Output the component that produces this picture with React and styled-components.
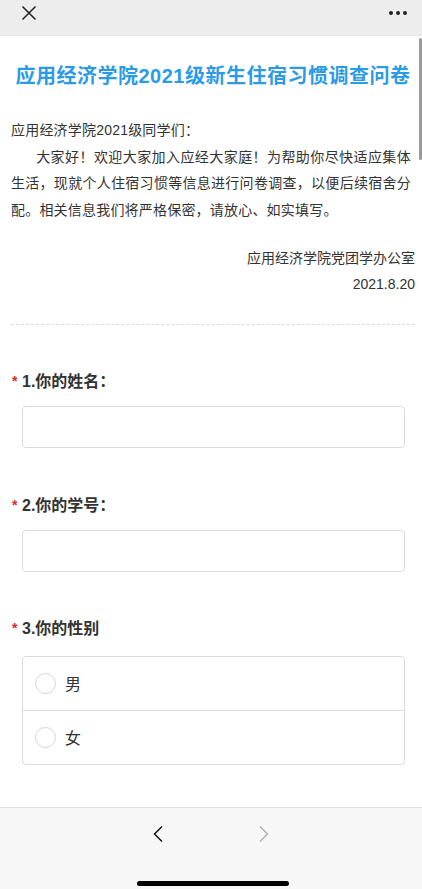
import React from 'react'
import styled, { createGlobalStyle } from 'styled-components'

const GlobalStyle = createGlobalStyle`
  html, body {
    margin: 0;
    padding: 0;
    background: #fff;
  }
  body {
    font-family: "Liberation Sans", "Noto Sans CJK SC", sans-serif;
    color: #333;
  }
`

const Screen = styled.div`
  width: 422px;
  height: 889px;
  display: flex;
  flex-direction: column;
  overflow: hidden;
  background: #fff;
`

const TopBar = styled.div`
  height: 36px;
  flex-shrink: 0;
  display: flex;
  align-items: flex-start;
  justify-content: space-between;
  padding: 0 14px 0 21px;
  box-sizing: border-box;
  background: #ededed;
  border-bottom: 1px solid #e4e4e4;
`

const BarButton = styled.div`
  height: 26px;
  display: flex;
  align-items: center;
`

const Body = styled.div`
  flex: 1;
  position: relative;
  overflow: hidden;
  padding: 0 7px 0 11px;
`

const ScrollThumb = styled.div`
  position: absolute;
  right: 0;
  top: 2px;
  width: 3px;
  height: 122px;
  border-radius: 2px;
  background: #9a9a9a;
`

const Title = styled.h1`
  margin: 26px 0 0;
  font-size: 20px;
  line-height: 28px;
  font-weight: bold;
  text-align: center;
  color: #2b9be5;
  white-space: nowrap;
  letter-spacing: 0.5px;
`

const Intro = styled.div`
  margin-top: 27px;
  padding-right: 4px;
  font-size: 14px;
  line-height: 26.7px;
  color: #333;
`

const Para = styled.p`
  margin: 0;
  text-indent: ${(props) => props.indent ? '1.8em' : '0'};
  text-align: justify;
  letter-spacing: 0.2px;
`

const Signature = styled.div`
  margin-top: 21px;
  text-align: right;
  font-size: 14px;
  line-height: 26.5px;
  color: #333;
`

const Divider = styled.div`
  margin: 26px 0 0;
  height: 0;
  border-top: 1.5px dashed #dcdcdc;
`

const Question = styled.div`
  margin-top: ${(props) => props.gap}px;
  padding: 0 10px 0 11px;
`

const Label = styled.div`
  position: relative;
  font-size: 16px;
  line-height: 24px;
  font-weight: bold;
  color: #333;
`

const Star = styled.span`
  position: absolute;
  left: -10px;
  top: -1px;
  color: #e0262c;
  font-size: 14px;
  font-weight: bold;
`

const Input = styled.div`
  margin-top: ${(props) => props.gap}px;
  height: 42px;
  border: 1px solid #dcdcdc;
  border-radius: 4px;
  box-sizing: border-box;
  background: #fff;
`

const Options = styled.div`
  margin-top: 15px;
  border: 1px solid #dcdcdc;
  border-radius: 4px;
  overflow: hidden;
`

const Option = styled.div`
  height: 53px;
  display: flex;
  align-items: center;
  gap: 9px;
  padding-left: 12px;
  border-top: ${(props) => props.first ? 'none' : '1px solid #dcdcdc'};
  font-size: 16px;
  color: #333;
`

const Radio = styled.span`
  width: 19px;
  height: 19px;
  border-radius: 50%;
  border: 1px solid #d6d6d6;
  background: #fff;
`

const BottomBar = styled.div`
  height: 82px;
  flex-shrink: 0;
  background: #f7f7f7;
  border-top: 1px solid #e2e2e2;
  box-sizing: border-box;
  display: flex;
  flex-direction: column;
  align-items: center;
`

const NavRow = styled.div`
  display: flex;
  gap: 94px;
  margin-top: 17px;
`

const HomeIndicator = styled.div`
  margin-top: auto;
  margin-bottom: 3px;
  margin-left: 4px;
  width: 152px;
  height: 5px;
  border-radius: 3px;
  background: #000;
`

const CloseIcon = () => (
  <svg width="16" height="16" viewBox="0 0 16 16">
    <path d="M1.5 1.5 L14.5 14.5 M14.5 1.5 L1.5 14.5" stroke="#222" strokeWidth="1.5" fill="none" />
  </svg>
)

const MoreIcon = () => (
  <svg width="20" height="6" viewBox="0 0 20 6">
    <circle cx="3" cy="3" r="2" fill="#222" />
    <circle cx="10" cy="3" r="2" fill="#222" />
    <circle cx="17" cy="3" r="2" fill="#222" />
  </svg>
)

const Chevron = ({ dir, color }) => (
  <svg width="12" height="18" viewBox="0 0 12 18">
    <path
      d={dir === 'left' ? 'M10 1.5 L2.5 9 L10 16.5' : 'M2 1.5 L9.5 9 L2 16.5'}
      stroke={color}
      strokeWidth="1.5"
      fill="none"
    />
  </svg>
)

const questions = [
  { no: 1, title: '你的姓名：', type: 'input', gap: 45 },
  { no: 2, title: '你的学号：', type: 'input', gap: 46 },
  { no: 3, title: '你的性别', type: 'radio', gap: 45, options: ['男', '女'] }
]

const App = () => (
  <Screen>
    <GlobalStyle />
    <TopBar>
      <BarButton><CloseIcon /></BarButton>
      <BarButton><MoreIcon /></BarButton>
    </TopBar>
    <Body>
      <ScrollThumb />
      <Title>应用经济学院2021级新生住宿习惯调查问卷</Title>
      <Intro>
        <Para>应用经济学院2021级同学们：</Para>
        <Para indent>大家好！欢迎大家加入应经大家庭！为帮助你尽快适应集体生活，现就个人住宿习惯等信息进行问卷调查，以便后续宿舍分配。相关信息我们将严格保密，请放心、如实填写。</Para>
      </Intro>
      <Signature>
        <div>应用经济学院党团学办公室</div>
        <div>2021.8.20</div>
      </Signature>
      <Divider />
      {questions.map((q) => (
        <Question key={q.no} gap={q.gap}>
          <Label><Star>*</Star>{q.no}.{q.title}</Label>
          {q.type === 'input' && <Input gap={12} />}
          {q.type === 'radio' &&
            <Options>
              {q.options.map((o, i) => (
                <Option key={o} first={i === 0}>
                  <Radio />
                  {o}
                </Option>
              ))}
            </Options>
          }
        </Question>
      ))}
    </Body>
    <BottomBar>
      <NavRow>
        <Chevron dir="left" color="#111" />
        <Chevron dir="right" color="#b0b0b0" />
      </NavRow>
      <HomeIndicator />
    </BottomBar>
  </Screen>
)

export default App
